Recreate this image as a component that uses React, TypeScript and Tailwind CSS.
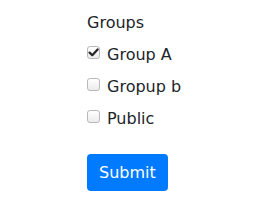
import React from "react";

function Box({ checked }: { checked?: boolean }) {
  return (
    <span className="mt-[3px] flex h-[13px] w-[13px] shrink-0 items-center justify-center rounded-[3px] border border-[#b9b9b9] bg-gradient-to-b from-white to-[#ececec]">
      {checked && (
        <svg width="11" height="11" viewBox="0 0 11 11">
          <path d="M1.6 5.6 L4.3 8.2 L9.6 2.4" fill="none" stroke="#262626" strokeWidth="2.2" strokeLinecap="round" strokeLinejoin="round" />
        </svg>
      )}
    </span>
  );
}

function Row({ label, checked }: { label: string; checked?: boolean }) {
  return (
    <label className="flex h-[24px] items-start gap-[7px] leading-[24px]">
      <Box checked={checked} />
      <span>{label}</span>
    </label>
  );
}

export default function App() {
  return (
    <div
      className="h-[210px] w-[265px] bg-white pl-[87px] pt-[11px] text-[16px] text-[#212529]"
      style={{ fontFamily: '"DejaVu Sans", sans-serif' }}
    >
      <div className="leading-[24px]">Groups</div>
      <div className="mt-[8px] flex flex-col gap-[8px]">
        <Row label="Group A" checked />
        <Row label="Gropup b" />
        <Row label="Public" />
      </div>
      <button className="mt-[23px] h-[37px] rounded-[4px] bg-[#007bff] px-[12px] leading-[24px] text-white">
        Submit
      </button>
    </div>
  );
}
